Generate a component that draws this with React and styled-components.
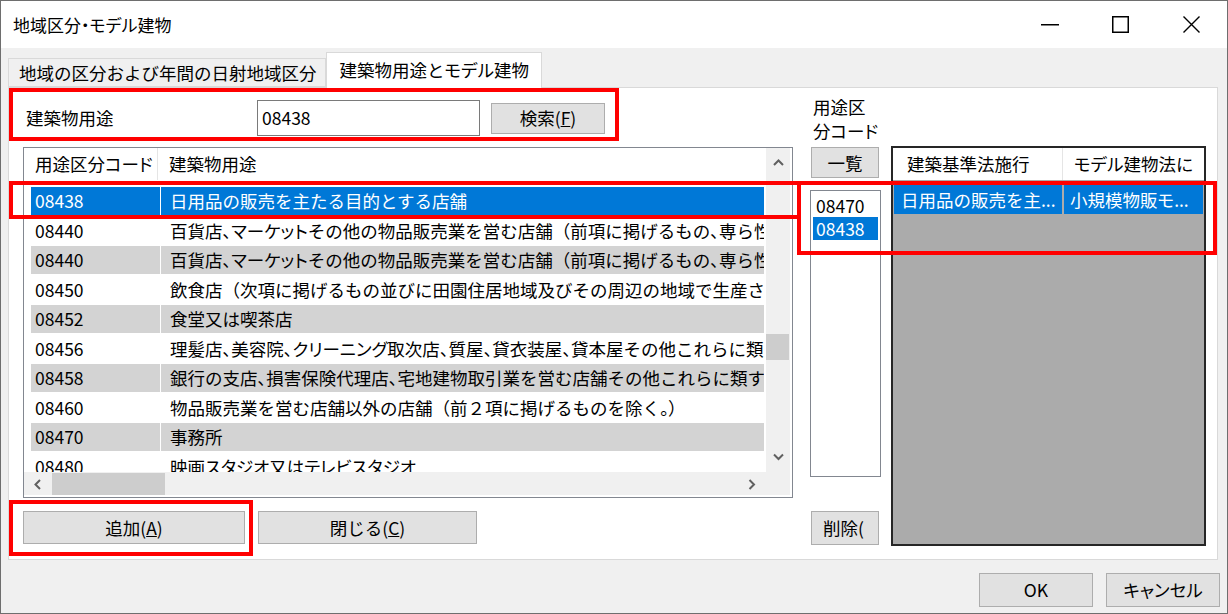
import React from 'react';
import styled, { createGlobalStyle } from 'styled-components';

const Global = createGlobalStyle`
  html, body { margin: 0; padding: 0; background: #ffffff; }
  body { font-family: "Noto Sans CJK JP", "Noto Sans", sans-serif; color: #000; }
  * { box-sizing: border-box; }
`;

const FONT = `"Noto Sans CJK JP", "Noto Sans", sans-serif`;

const Kana = styled.span`
  font-feature-settings: "palt" 1;
`;

const jp = s =>
  s
    .split(/([\u30A0-\u30FF\u3001\u3002\u30FB\uFF09]+)/)
    .map((part, i) => (i % 2 ? <Kana key={i}>{part}</Kana> : part));

const Window = styled.div`
  position: relative;
  width: 1228px;
  height: 614px;
  border: 1px solid #6e6e6e;
  background: #f0f0f0;
  display: flex;
  flex-direction: column;
  overflow: hidden;
  font-family: ${FONT};
  font-size: 17.5px;
`;

const TitleBar = styled.div`
  height: 47px;
  flex: none;
  background: #ffffff;
  display: flex;
  align-items: center;
`;

const Title = styled.div`
  flex: 1;
  padding-left: 12px;
  font-size: 17px;
  line-height: 20px;
`;

const CaptionButton = styled.div`
  width: 71px;
  height: 47px;
  display: flex;
  align-items: center;
  justify-content: center;
`;

const Body = styled.div`
  flex: 1;
  display: flex;
  flex-direction: column;
  padding: 4px 9px 0 7px;
`;

const TabStrip = styled.div`
  height: 35px;
  display: flex;
  align-items: flex-end;
`;

const Tab = styled.div`
  position: relative;
  z-index: 1;
  height: ${p => (p.$active ? '36px' : '29px')};
  margin-bottom: ${p => (p.$active ? '-1px' : '0')};
  padding: ${p => (p.$active ? '6px 12px 0 13px' : '0 8px 0 10px')};
  background: ${p => (p.$active ? '#ffffff' : '#f0f0f0')};
  border: 1px solid #d9d9d9;
  border-bottom: ${p => (p.$active ? 'none' : '1px solid #d9d9d9')};
  line-height: ${p => (p.$active ? '22px' : '27px')};
  font-size: 17.5px;
  white-space: nowrap;
`;

const TabPage = styled.div`
  width: 1210px;
  height: 473px;
  background: #ffffff;
  border: 1px solid #d9d9d9;
  display: flex;
  align-items: flex-start;
  padding: 7px 0 0 14px;
`;

const LeftCol = styled.div`
  width: 770px;
  display: flex;
  flex-direction: column;
`;

const SearchRow = styled.div`
  margin-top: 5px;
  height: 36px;
  display: flex;
  align-items: center;
`;

const FieldLabel = styled.div`
  width: 234px;
  padding-left: 3px;
  line-height: 22px;
`;

const TextInput = styled.div`
  width: 223px;
  height: 36px;
  border: 1px solid #7a7a7a;
  background: #fff;
  padding-left: 4px;
  line-height: 34px;
`;

const Button = styled.div`
  width: ${p => p.$w}px;
  height: ${p => p.$h || 32}px;
  margin-left: ${p => p.$ml || 0}px;
  margin-top: ${p => p.$mt || 0}px;
  background: #e1e1e1;
  border: 1px solid #adadad;
  display: flex;
  align-items: center;
  justify-content: ${p => (p.$left ? 'flex-start' : 'center')};
  padding-left: ${p => (p.$left ? '11px' : '0')};
  overflow: hidden;
  white-space: nowrap;
  font-size: 17.5px;
  line-height: 22px;
  flex: none;
`;

const Grid = styled.div`
  margin-top: 11px;
  height: 351px;
  border: 1px solid #828790;
  background: #fff;
  display: flex;
  flex-direction: column;
  padding: 0 2px 2px 0;
`;

const GridBody = styled.div`
  height: 324px;
  display: flex;
`;

const Viewport = styled.div`
  width: 742px;
  overflow: hidden;
  display: flex;
  flex-direction: column;
`;

const HeaderRow = styled.div`
  height: 32px;
  flex: none;
  display: flex;
  background: #fff;
`;

const HeaderCell = styled.div`
  width: ${p => (p.$w ? `${p.$w}px` : 'auto')};
  flex: ${p => (p.$w ? 'none' : '1')};
  min-width: 0;
  border-right: ${p => (p.$sep ? '1px solid #e5e5e5' : 'none')};
  padding-left: ${p => p.$pl || 11}px;
  white-space: nowrap;
  overflow: hidden;
  line-height: 32px;
`;

const Rows = styled.div`
  padding-top: 7px;
  display: flex;
  flex-direction: column;
`;

const Row = styled.div`
  height: 29.5px;
  flex: none;
  display: flex;
  align-items: flex-start;
  padding: 0 2px 0 7px;
  gap: 1px;
`;

const Cell = styled.div`
  height: 28px;
  width: ${p => (p.$w ? `${p.$w}px` : 'auto')};
  flex: ${p => (p.$w ? 'none' : '1')};
  min-width: 0;
  background: ${p => (p.$sel ? '#0078d7' : p.$alt ? '#d3d3d3' : '#ffffff')};
  color: ${p => (p.$sel ? '#ffffff' : '#000000')};
  padding-left: ${p => p.$pl}px;
  white-space: nowrap;
  overflow: hidden;
  line-height: 28px;
`;

const VScroll = styled.div`
  width: 24px;
  background: #f0f0f0;
  display: flex;
  flex-direction: column;
`;

const ArrowBox = styled.div`
  width: ${p => p.$w || 24}px;
  height: ${p => p.$h || 30}px;
  flex: none;
  display: flex;
  align-items: center;
  justify-content: center;
`;

const Track = styled.div`
  flex: 1;
  display: flex;
  flex-direction: column;
`;

const VThumb = styled.div`
  margin-top: 156px;
  height: 26px;
  margin-right: 1px;
  background: #cdcdcd;
`;

const HScroll = styled.div`
  height: 23px;
  background: #f0f0f0;
  display: flex;
  align-items: stretch;
  padding-top: 1px;
`;

const HThumb = styled.div`
  width: 113px;
  background: #cdcdcd;
`;

const Spacer = styled.div`
  flex: 1;
`;

const ButtonRow = styled.div`
  margin-top: 13px;
  display: flex;
`;

const MidCol = styled.div`
  width: 71px;
  margin-left: 17px;
  display: flex;
  flex-direction: column;
`;

const MidLabel = styled.div`
  padding-left: 3px;
  line-height: 23.5px;
  height: 52px;
  white-space: nowrap;
`;

const ListBox = styled.div`
  margin-top: 12px;
  height: 287px;
  border: 1px solid #828790;
  background: #fff;
  padding: 3px 2px;
`;

const ListItem = styled.div`
  height: 23px;
  padding-left: 3px;
  line-height: 23px;
  background: ${p => (p.$sel ? '#0078d7' : 'transparent')};
  color: ${p => (p.$sel ? '#fff' : '#000')};
`;

const ModelGrid = styled.div`
  width: 315px;
  height: 400px;
  margin-left: 10px;
  margin-top: 51px;
  border: 2px solid #262626;
  background: #ababab;
  display: flex;
  flex-direction: column;
`;

const ModelRow = styled.div`
  margin-top: 5px;
  height: 29px;
  display: flex;
  padding-left: 1px;
  gap: 2px;
`;

const ModelCell = styled.div`
  width: ${p => p.$w}px;
  background: #0078d7;
  color: #fff;
  padding-left: ${p => p.$pl}px;
  white-space: nowrap;
  overflow: hidden;
  line-height: 29px;
`;

const Footer = styled.div`
  margin-top: 13px;
  margin-right: -2px;
  display: flex;
  justify-content: flex-end;
  gap: 13px;
`;

const Mark = styled.div`
  position: absolute;
  left: ${p => p.$x - 1}px;
  top: ${p => p.$y - 1}px;
  width: ${p => p.$w}px;
  height: ${p => p.$h}px;
  border: 4px solid #ff0000;
  pointer-events: none;
  z-index: 5;
`;

const Chevron = ({ dir }) => {
  const paths = {
    up: 'M1 6 L5.5 1.5 L10 6',
    down: 'M1 1.5 L5.5 6 L10 1.5',
    left: 'M6 1 L1.5 5.5 L6 10',
    right: 'M1.5 1 L6 5.5 L1.5 10',
  };
  const horiz = dir === 'left' || dir === 'right';
  return (
    <svg width={horiz ? 8 : 11} height={horiz ? 11 : 8} viewBox={horiz ? '0 0 8 11' : '0 0 11 8'}>
      <path d={paths[dir]} fill="none" stroke="#606060" strokeWidth="2" />
    </svg>
  );
};

const rows = [
  ['08438', '日用品の販売を主たる目的とする店舗'],
  ['08440', '百貨店、マーケットその他の物品販売業を営む店舗（前項に掲げるもの、専ら性風俗特殊営業を営む店舗を除く。）'],
  ['08440', '百貨店、マーケットその他の物品販売業を営む店舗（前項に掲げるもの、専ら性風俗特殊営業を営む店舗を除く。）'],
  ['08450', '飲食店（次項に掲げるもの並びに田園住居地域及びその周辺の地域で生産された農産物を材料とする料理を提供する店舗を除く。）'],
  ['08452', '食堂又は喫茶店'],
  ['08456', '理髪店、美容院、クリーニング取次店、質屋、貸衣装屋、貸本屋その他これらに類するサービス業を営む店舗'],
  ['08458', '銀行の支店、損害保険代理店、宅地建物取引業を営む店舗その他これらに類するサービス業を営む店舗'],
  ['08460', '物品販売業を営む店舗以外の店舗（前２項に掲げるものを除く。）'],
  ['08470', '事務所'],
  ['08480', '映画スタジオ又はテレビスタジオ'],
];

export default function App() {
  return (
    <>
      <Global />
      <Window>
        <TitleBar>
          <Title>{jp('地域区分・モデル建物')}</Title>
          <CaptionButton>
            <svg width="18" height="2" viewBox="0 0 18 2"><rect x="0" y="0" width="18" height="1.5" fill="#000" /></svg>
          </CaptionButton>
          <CaptionButton>
            <svg width="17" height="17" viewBox="0 0 17 17"><rect x="0.75" y="0.75" width="15.5" height="15.5" fill="none" stroke="#000" strokeWidth="1.5" /></svg>
          </CaptionButton>
          <CaptionButton>
            <svg width="17" height="17" viewBox="0 0 17 17"><path d="M0.5 0.5 L16.5 16.5 M16.5 0.5 L0.5 16.5" stroke="#000" strokeWidth="1.4" /></svg>
          </CaptionButton>
        </TitleBar>
        <Body>
          <TabStrip>
            <Tab>地域の区分および年間の日射地域区分</Tab>
            <Tab $active>{jp('建築物用途とモデル建物')}</Tab>
          </TabStrip>
          <TabPage>
            <LeftCol>
              <SearchRow>
                <FieldLabel>建築物用途</FieldLabel>
                <TextInput>08438</TextInput>
                <Button $w={114} $h={31} $ml={11}>検索(<u>F</u>)</Button>
              </SearchRow>
              <Grid>
                <GridBody>
                  <Viewport>
                    <HeaderRow>
                      <HeaderCell $w={134} $sep>{jp('用途区分コード')}</HeaderCell>
                      <HeaderCell>建築物用途</HeaderCell>
                    </HeaderRow>
                    <Rows>
                      {rows.map(([code, name], i) => (
                        <Row key={i}>
                          <Cell $w={129} $pl={4} $sel={i === 0} $alt={i % 2 === 0}>{code}</Cell>
                          <Cell $pl={9} $sel={i === 0} $alt={i % 2 === 0}>{jp(name)}</Cell>
                        </Row>
                      ))}
                    </Rows>
                  </Viewport>
                  <VScroll>
                    <ArrowBox><Chevron dir="up" /></ArrowBox>
                    <Track><VThumb /></Track>
                    <ArrowBox><Chevron dir="down" /></ArrowBox>
                  </VScroll>
                </GridBody>
                <HScroll>
                  <ArrowBox $w={28} $h={22}><Chevron dir="left" /></ArrowBox>
                  <HThumb />
                  <Spacer />
                  <ArrowBox $w={28} $h={22}><Chevron dir="right" /></ArrowBox>
                  <ArrowBox $w={24} $h={22} />
                </HScroll>
              </Grid>
              <ButtonRow>
                <Button $w={222} $h={33}>追加(<u>A</u>)</Button>
                <Button $w={219} $h={33} $ml={13}>閉じる(<u>C</u>)</Button>
              </ButtonRow>
            </LeftCol>
            <MidCol>
              <MidLabel>用途区<br />{jp('分コード')}</MidLabel>
              <Button $w={68} $h={31} $ml={1}>一覧</Button>
              <ListBox>
                <ListItem>08470</ListItem>
                <ListItem $sel>08438</ListItem>
              </ListBox>
              <Button $w={68} $h={34} $ml={1} $mt={34} $left>削除(</Button>
            </MidCol>
            <ModelGrid>
              <HeaderRow>
                <HeaderCell $w={170} $sep $pl={14}>建築基準法施行</HeaderCell>
                <HeaderCell $pl={11}>{jp('モデル建物法に')}</HeaderCell>
              </HeaderRow>
              <ModelRow>
                <ModelCell $w={168} $pl={7}>日用品の販売を主...</ModelCell>
                <ModelCell $w={139} $pl={6}>{jp('小規模物販モ')}...</ModelCell>
              </ModelRow>
            </ModelGrid>
          </TabPage>
          <Footer>
            <Button $w={114} $h={34}>OK</Button>
            <Button $w={114} $h={34}>{jp('キャンセル')}</Button>
          </Footer>
        </Body>
        <Mark $x={9} $y={88} $w={610} $h={53} />
        <Mark $x={9} $y={181} $w={792} $h={38} />
        <Mark $x={797} $y={181} $w={420} $h={74} />
        <Mark $x={9} $y={500} $w={244} $h={56} />
      </Window>
    </>
  );
}
